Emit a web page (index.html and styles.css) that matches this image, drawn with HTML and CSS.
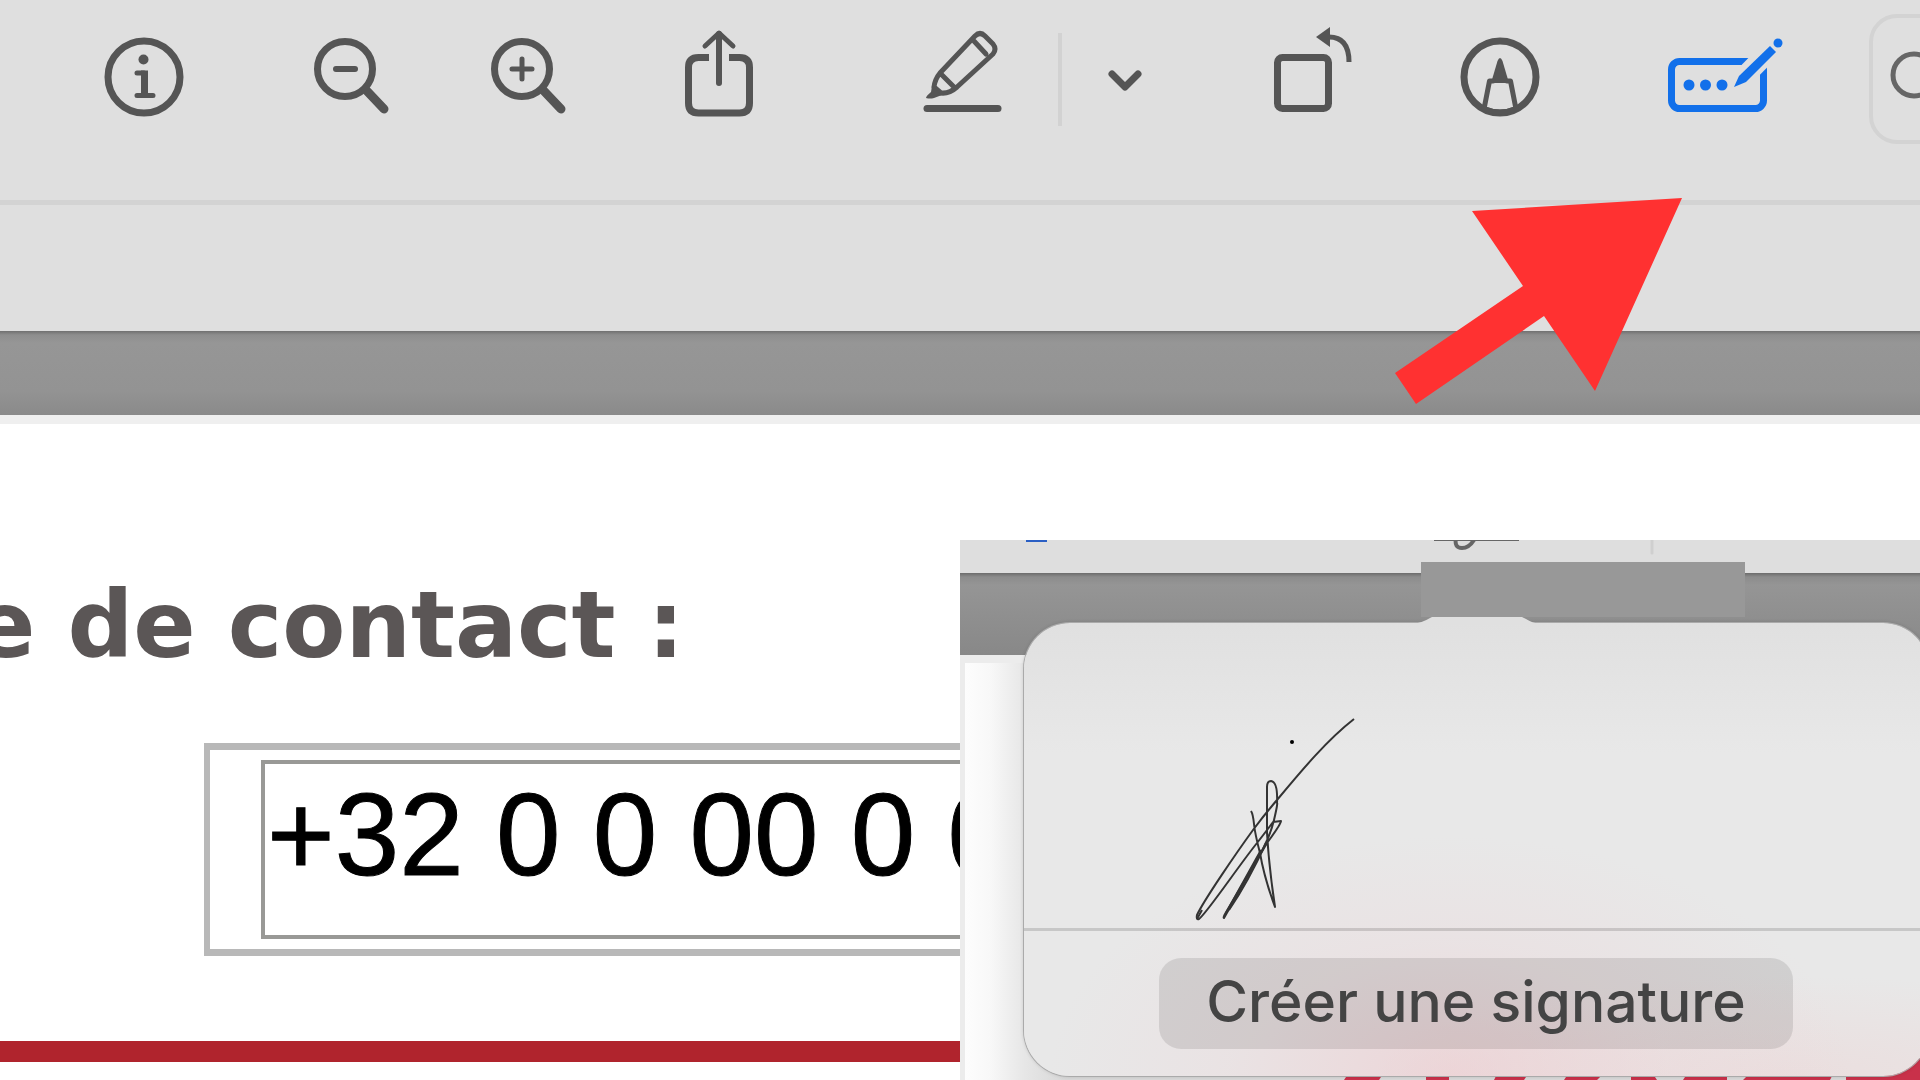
FILE: index.html
```html
<!DOCTYPE html>
<html lang="fr">
<head>
  <meta charset="UTF-8">
  <meta name="viewport" content="width=device-width, initial-scale=1.0">
  <title>Créer une signature</title>
  <link rel="stylesheet" href="styles.css">
</head>
<body>
  <header class="toolbar">
    <button class="tool" aria-label="Informations">
      <svg width="78" height="100" viewBox="0 0 78 100">
        <circle cx="39" cy="57" r="36" stroke-width="7"/>
        <circle class="solid" cx="38.500" cy="39.500" r="5"/>
        <path stroke-width="5" d="M32 53h7M32 75.500h16"/>
        <path stroke-width="7" stroke-linecap="butt" d="M39.500 50.500V76"/>
      </svg>
    </button>
    <button class="tool" aria-label="Zoom arrière">
      <svg width="76" height="100" viewBox="0 0 76 100">
        <circle cx="31" cy="49" r="27.500" stroke-width="7"/>
        <path stroke-width="6" d="M22 49h19"/>
        <path stroke-width="9" d="M52 70l18 19"/>
      </svg>
    </button>
    <button class="tool" aria-label="Zoom avant">
      <svg width="76" height="100" viewBox="0 0 76 100">
        <circle cx="31" cy="49" r="27.500" stroke-width="7"/>
        <path stroke-width="5" d="M21 49h20M31 39v20"/>
        <path stroke-width="9" d="M52 70l18 19"/>
      </svg>
    </button>
    <button class="tool" aria-label="Partager">
      <svg width="68" height="100" viewBox="0 0 68 100">
        <path stroke-width="7" stroke-linecap="butt" d="M24 37.500H13.500Q3.500 37.500 3.500 47.500V83Q3.500 93 13.500 93H54.500Q64.500 93 64.500 83V47.500Q64.500 37.500 54.500 37.500H44"/>
        <path stroke-width="6" d="M34 14V63"/>
        <path stroke-width="5" d="M20 26L34 13L48 26"/>
      </svg>
    </button>
    <button class="tool" aria-label="Surligner">
      <svg width="79" height="100" viewBox="0 0 79 100">
        <path stroke-width="7" d="M4 88.500H75"/>
        <path stroke-width="5" d="M17 53L52 16Q57 11 62 16L70 24Q74 29 70 34L34 67Q26 74 18 73L11 67Q12 59 17 53ZM17 53L32 68M50 20L63 34"/>
        <path class="solid" d="M9 66L19 75L11 78Q7 79 3 78Q3 76 8 72Z"/>
      </svg>
    </button>
    <span class="separator"></span>
    <button class="tool" aria-label="Options de surlignage">
      <svg width="36" height="100" viewBox="0 0 36 100">
        <path stroke-width="7" d="M5 54L18 67L31 54"/>
      </svg>
    </button>
    <button class="tool" aria-label="Faire pivoter">
      <svg width="77" height="100" viewBox="0 0 77 100">
        <rect x="3.500" y="37.500" width="51" height="51" rx="5" stroke-width="7"/>
        <path class="solid" d="M42 17L56 7V27Z"/>
        <path stroke-width="5" stroke-linecap="butt" d="M55 17Q75 17 75 42"/>
      </svg>
    </button>
    <button class="tool" aria-label="Annoter">
      <svg width="78" height="100" viewBox="0 0 78 100">
        <circle cx="39" cy="57" r="36" stroke-width="7"/>
        <path class="solid" d="M36.500 41Q39 35 41.500 41L48 63H30Z"/>
        <path stroke-width="5" d="M32 61H28.500L23 89M46 61H49.500L55 89M24 89Q39 95 54 89"/>
      </svg>
    </button>
    <button class="tool active" aria-label="Remplir un formulaire">
      <svg width="115" height="100" viewBox="0 0 115 100">
        <rect x="3.500" y="41.500" width="92" height="47" rx="8" stroke-width="7"/>
        <path class="gap" stroke-width="20" d="M68 65L110 22"/>
        <circle class="solid" cx="21" cy="65" r="5.500"/>
        <circle class="solid" cx="37.500" cy="65" r="5.500"/>
        <circle class="solid" cx="54" cy="65" r="5.500"/>
        <path class="solid" d="M66 67L71 56L102 26L108 32L78 62Z"/>
        <circle class="solid" cx="110" cy="23" r="4.500"/>
      </svg>
    </button>
    <div class="search">
      <svg width="60" height="60" viewBox="0 0 60 60">
        <circle cx="25" cy="25" r="21" stroke-width="5"/>
        <path stroke-width="5" d="M41 41L56 56"/>
      </svg>
    </div>
  </header>
  <div class="subbar"></div>
  <div class="canvas-edge"></div>

  <main class="document">
    <label class="field-label" for="phone">e de contact :</label>
    <div class="field">
      <input class="field-input" id="phone" type="text" value="+32 0 0 00 0 00">
    </div>
    <div class="rule"></div>
  </main>

  <svg class="arrow" width="288" height="208" viewBox="0 0 288 208">
    <path d="M287 1L77 14L128 89L0 176L21 207L149 119L200 194Z"/>
  </svg>

  <section class="inset">
    <div class="inset-toolbar">
      <svg width="960" height="32" viewBox="0 0 960 32">
        <path class="blue" d="M66 0H87V2H66Z"/>
        <path stroke-width="2" stroke-linecap="butt" d="M474 0H559"/>
        <path stroke-width="4" d="M496 -2Q494 8 502 8Q509 8 514 0"/>
        <path class="light" stroke-width="3" d="M692 0V13"/>
      </svg>
    </div>
    <div class="inset-edge"></div>
    <div class="inset-page"></div>
    <!-- red banner showing under the popover -->
    <svg class="banner" width="576" height="22" viewBox="0 0 576 22">
      <path d="M0 22L4 16H39L35 22ZM82 16H105V22H82ZM150 22L153 16H184L180 22ZM220 22L224 16H259L253 22ZM287 16H309L313 22H287ZM339 22L343 16H383V22ZM399 22L405 16H489L486 22ZM502 16H530L576 0V22H502Z"/>
    </svg>
    <div class="popover">
      <div class="signature">
        <svg width="180" height="220" viewBox="0 0 180 220">
          <path d="M162 7C135 28 110 58 85 88Q73 102 61 118C45 140 12 188 5 203Q4 208 7 207C15 201 45 156 65 131Q76 117 81 110L89 109Q89 112 75 131L33 202Q31 206 32 206L67 144Q78 125 82 108T85 91Q86 70 79 69Q75 69 75 75V121Q77 155 83 195Q72 165 68 141Q63 122 62 112T59 99"/>
          <path d="M34 201L69 138M37 198Q56 170 74 131M5 207L10 198"/>
          <circle cx="100" cy="30" r="2"/>
        </svg>
      </div>
      <div class="popover-footer">
        <button class="create">Créer une signature</button>
      </div>
    </div>
    <svg class="notch" width="128" height="8" viewBox="0 0 128 8">
      <path d="M0 8Q10 7 18 2L22 0H108L114 3Q120 7 128 8Z"/>
    </svg>
    <div class="mask"></div>
  </section>
</body>
</html>
```

FILE: styles.css
```css
* {
  box-sizing: border-box;
}
body {
  margin: 0;
  min-height: 100vh;
  position: relative;
  display: flex;
  flex-direction: column;
  overflow: hidden;
  background: #fff;
  font-family: "Liberation Sans", Arial, sans-serif;
}
button {
  border: 0;
  padding: 0;
  background: none;
}
svg {
  display: block;
  overflow: visible;
}

/* toolbar */
.toolbar {
  display: grid;
  grid-template-columns: 209fr 177fr 194fr 238fr 135fr 49fr 167fr 187fr 207fr 201fr minmax(0, 51fr);
  align-items: start;
  height: 205px;
  padding: 20px 0 0 105px;
  border-bottom: 5px solid #d3d3d3;
  background: #dfdfdf;
}
.tool {
  justify-self: start;
  color: #555;
}
.tool.active {
  color: #1270ea;
}
.tool svg,
.search svg,
.inset-toolbar svg {
  fill: none;
  stroke: currentColor;
  stroke-linecap: round;
  stroke-linejoin: round;
}
.tool .solid {
  fill: currentColor;
  stroke: none;
}
.tool .gap {
  stroke: #dfdfdf;
  stroke-linecap: butt;
}
.separator {
  width: 4px;
  height: 93px;
  margin-top: 13px;
  background: #d2d2d2;
}
.search {
  width: 300px;
  height: 130px;
  margin-top: -6px;
  padding: 32px 16px;
  border: 4px solid #d3d3d3;
  border-radius: 28px;
  color: #666;
}
.subbar {
  height: 126px;
  background: #dfdfdf;
}
.canvas-edge {
  height: 84px;
  background: linear-gradient(#707070, #8e8e8e 4px, #969696 12px, #939393 60px, #8a8a8a);
}

/* document */
.document {
  display: flex;
  flex-direction: column;
  padding-top: 148px;
  border-top: 9px solid #efefef;
}
.field-label {
  margin-left: -27px;
  color: #5b5656;
  font: bold 92px/108px "DejaVu Sans", Verdana, sans-serif;
}
.field {
  margin: 63px 0 0 204px;
  padding: 10px 0 10px 51px;
  border: solid #b8b8b8;
  border-width: 7px 0 7px 6px;
}
.field-input {
  display: block;
  width: 100%;
  height: 179px;
  padding: 0 0 30px 2px;
  border: 4px solid #999996;
  border-radius: 0;
  background: #fff;
  color: #000;
  font: 116px "Liberation Sans", Arial, sans-serif;
  -webkit-text-stroke: 1px #000;
}
.rule {
  height: 21px;
  margin-top: 85px;
  background: #b0242d;
}

.arrow {
  position: absolute;
  top: 197px;
  right: 237px;
  fill: #ff3131;
}

/* signature popover */
.inset {
  position: absolute;
  right: 0;
  bottom: 0;
  width: 50%;
  height: 540px;
  display: flex;
  flex-direction: column;
  overflow: hidden;
  background: #fff;
}
.inset-toolbar {
  height: 33px;
  background: #dedede;
  color: #666;
  overflow: hidden;
}
.inset-toolbar .blue {
  fill: #2a5fc4;
  stroke: none;
}
.inset-toolbar .light {
  stroke: #cfcfcf;
}
.inset-edge {
  height: 82px;
  background: linear-gradient(#6c6c6c, #8c8c8c 4px, #959595 12px, #888);
}
.inset-page {
  flex: 1;
  border: solid #ececec;
  border-width: 8px 0 0 5px;
  background: linear-gradient(90deg, #fdfdfd, #f8f8f8 25px, #e6e6e6 60px, #d8d8d8 100px);
}
.banner {
  position: absolute;
  right: 0;
  bottom: 0;
  fill: #c9314a;
}
.popover {
  position: absolute;
  top: 83px;
  left: 64px;
  right: -9px;
  height: 453px;
  display: flex;
  flex-direction: column;
  border-radius: 46px;
  background:
    radial-gradient(ellipse 400px 240px at 47% 100%, rgba(240, 195, 200, .5), rgba(240, 205, 210, .2) 55%, rgba(240, 215, 218, 0)),
    radial-gradient(ellipse 420px 100px at 85% 100%, rgba(240, 200, 200, .3), rgba(240, 200, 200, 0)),
    linear-gradient(#e0e0e0, #e8e8e8 130px);
  box-shadow: 0 0 0 1px #aaa, 0 0 4px rgba(0, 0, 0, .2);
}
.signature {
  height: 308px;
  padding: 89px 0 0 168px;
  border-bottom: 3px solid rgba(0, 0, 0, .14);
}
.signature path {
  fill: none;
  stroke: #333;
  stroke-width: 2;
  stroke-linejoin: round;
}
.popover-footer {
  padding: 27px 136px 0 135px;
}
.create {
  width: 100%;
  height: 91px;
  padding-bottom: 3px;
  border-radius: 22px;
  background: rgba(0, 0, 0, .1);
  color: #444;
  font: 500 57px/88px Inter, sans-serif;
  white-space: nowrap;
}
.notch {
  position: absolute;
  top: 76px;
  left: 452px;
  fill: #e0e0e0;
}
.mask {
  position: absolute;
  top: 22px;
  left: 461px;
  width: 324px;
  height: 55px;
  background: #989898;
}
```
